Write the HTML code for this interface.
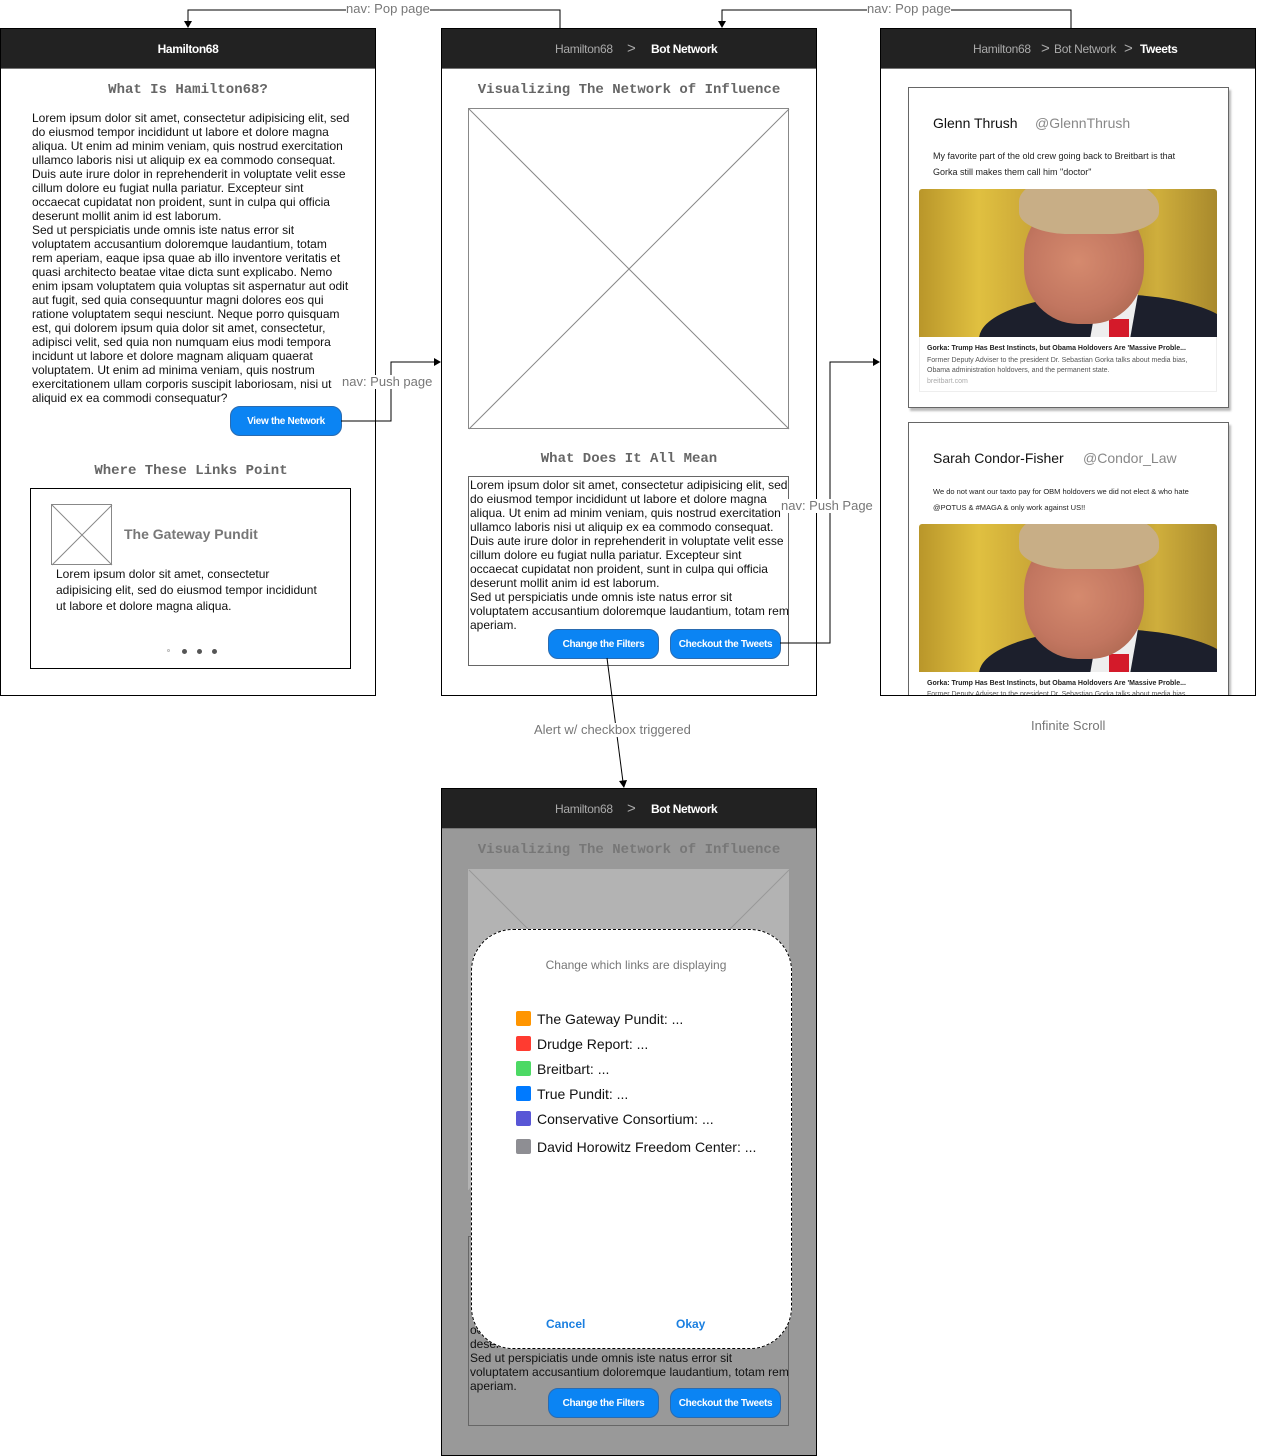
<!DOCTYPE html>
<html><head><meta charset="utf-8"><style>
*{margin:0;padding:0;box-sizing:border-box}
body{width:1261px;height:1456px;position:relative;background:#fff;font-family:"Liberation Sans",Arial,sans-serif;overflow:hidden}
.a{position:absolute;white-space:nowrap}
.panel{position:absolute;border:1px solid #000;background:#fff;overflow:hidden}
.hdr{position:absolute;left:0;top:0;right:0;height:40px;background:#222;border-bottom:1px solid #777}
.mono{font-family:"Liberation Mono",monospace;font-size:14px;font-weight:bold;color:#666}
.body{font-size:12px;line-height:14px;color:#111}
.btn{position:absolute;height:30px;background:#0b84f3;border:1px solid #2a6bb0;border-radius:10px;color:#fff;font-weight:bold;font-size:10px;text-align:center;line-height:30px;letter-spacing:-0.3px}
.lbl{position:absolute;font-size:13px;color:#777;background:#fff;white-space:nowrap;line-height:14px}
.sq{position:absolute;width:15px;height:15px;border-radius:2px}
.it{position:absolute;font-size:14px;color:#111;white-space:nowrap}
.photo{position:absolute;overflow:hidden;background:linear-gradient(90deg,#b9962a 0%,#e0c040 20%,#c8a436 40%,#a8862a 60%,#cfae3c 80%,#a8892c 100%)}
</style></head><body>

<!-- Left panel -->
<div class="panel" style="left:0;top:28px;width:376px;height:668px">
 <div class="hdr"><div class="a" style="left:0;right:0;top:13px;text-align:center;color:#fff;font-weight:bold;font-size:12px;letter-spacing:-0.4px">Hamilton68</div></div>
 <div class="a mono" style="left:0;width:374px;text-align:center;top:53px">What Is Hamilton68?</div>
 <div class="a body" style="left:31px;top:82px">Lorem ipsum dolor sit amet, consectetur adipisicing elit, sed<br>do eiusmod tempor incididunt ut labore et dolore magna<br>aliqua. Ut enim ad minim veniam, quis nostrud exercitation<br>ullamco laboris nisi ut aliquip ex ea commodo consequat.<br>Duis aute irure dolor in reprehenderit in voluptate velit esse<br>cillum dolore eu fugiat nulla pariatur. Excepteur sint<br>occaecat cupidatat non proident, sunt in culpa qui officia<br>deserunt mollit anim id est laborum.<br>Sed ut perspiciatis unde omnis iste natus error sit<br>voluptatem accusantium doloremque laudantium, totam<br>rem aperiam, eaque ipsa quae ab illo inventore veritatis et<br>quasi architecto beatae vitae dicta sunt explicabo. Nemo<br>enim ipsam voluptatem quia voluptas sit aspernatur aut odit<br>aut fugit, sed quia consequuntur magni dolores eos qui<br>ratione voluptatem sequi nesciunt. Neque porro quisquam<br>est, qui dolorem ipsum quia dolor sit amet, consectetur,<br>adipisci velit, sed quia non numquam eius modi tempora<br>incidunt ut labore et dolore magnam aliquam quaerat<br>voluptatem. Ut enim ad minima veniam, quis nostrum<br>exercitationem ullam corporis suscipit laboriosam, nisi ut<br>aliquid ex ea commodi consequatur?</div>
 <div class="btn" style="left:229px;top:377px;width:112px">View the Network</div>
 <div class="a mono" style="left:0;width:380px;text-align:center;top:434px">Where These Links Point</div>
 <div style="position:absolute;left:29px;top:459px;width:321px;height:181px;border:1px solid #000"></div>
 <svg style="position:absolute;left:50px;top:475px" width="62" height="62"><rect x="0.5" y="0.5" width="60" height="60" fill="#fff" stroke="#888"/><path d="M1 1L61 61M61 1L1 61" stroke="#888"/></svg>
 <div class="a" style="left:123px;top:497px;font-size:14px;font-weight:bold;color:#777">The Gateway Pundit</div>
 <div class="a" style="left:55px;top:537px;font-size:12px;line-height:16px;color:#111">Lorem ipsum dolor sit amet, consectetur<br>adipisicing elit, sed do eiusmod tempor incididunt<br>ut labore et dolore magna aliqua.</div>
 <div style="position:absolute;left:166px;top:620px;width:3px;height:3px;border:1px solid #bbb;border-radius:50%"></div>
 <div style="position:absolute;left:181px;top:620px;width:5px;height:5px;background:#555;border-radius:50%"></div>
 <div style="position:absolute;left:196px;top:620px;width:5px;height:5px;background:#555;border-radius:50%"></div>
 <div style="position:absolute;left:211px;top:620px;width:5px;height:5px;background:#555;border-radius:50%"></div>
</div>

<!-- Middle panel -->
<div class="panel" style="left:441px;top:28px;width:376px;height:668px">
 <div class="hdr">
  <div class="a" style="left:113px;top:13px;color:#aaa;font-size:12px;letter-spacing:-0.3px">Hamilton68</div>
  <div class="a" style="left:185px;top:11px;color:#aaa;font-size:15px">&gt;</div>
  <div class="a" style="left:209px;top:13px;color:#fff;font-weight:bold;font-size:12px;letter-spacing:-0.4px">Bot Network</div>
 </div>
 <div class="a mono" style="left:0;width:374px;text-align:center;top:53px">Visualizing The Network of Influence</div>
 <svg style="position:absolute;left:26px;top:79px" width="322" height="322"><rect x="0.5" y="0.5" width="320" height="320" fill="#fff" stroke="#888"/><path d="M1 1L321 321M321 1L1 321" stroke="#888"/></svg>
 <div class="a mono" style="left:0;width:374px;text-align:center;top:422px">What Does It All Mean</div>
 <div style="position:absolute;left:26px;top:447px;width:321px;height:190px;border:1px solid #666"></div>
 <div class="a body" style="left:28px;top:449px">Lorem ipsum dolor sit amet, consectetur adipisicing elit, sed<br>do eiusmod tempor incididunt ut labore et dolore magna<br>aliqua. Ut enim ad minim veniam, quis nostrud exercitation<br>ullamco laboris nisi ut aliquip ex ea commodo consequat.<br>Duis aute irure dolor in reprehenderit in voluptate velit esse<br>cillum dolore eu fugiat nulla pariatur. Excepteur sint<br>occaecat cupidatat non proident, sunt in culpa qui officia<br>deserunt mollit anim id est laborum.<br>Sed ut perspiciatis unde omnis iste natus error sit<br>voluptatem accusantium doloremque laudantium, totam rem<br>aperiam.</div>
 <div class="btn" style="left:106px;top:600px;width:111px">Change the Filters</div>
 <div class="btn" style="left:228px;top:600px;width:111px">Checkout the Tweets</div>
</div>

<!-- Right panel -->
<div class="panel" style="left:880px;top:28px;width:376px;height:668px">
 <div class="hdr">
  <div class="a" style="left:92px;top:13px;color:#aaa;font-size:12px;letter-spacing:-0.3px">Hamilton68</div>
  <div class="a" style="left:160px;top:11px;color:#aaa;font-size:15px">&gt;</div>
  <div class="a" style="left:173px;top:13px;color:#aaa;font-size:12px;letter-spacing:-0.3px">Bot Network</div>
  <div class="a" style="left:243px;top:11px;color:#aaa;font-size:15px">&gt;</div>
  <div class="a" style="left:259px;top:13px;color:#fff;font-weight:bold;font-size:12px;letter-spacing:-0.4px">Tweets</div>
 </div>
 <!-- tweet 1 -->
 <div style="position:absolute;left:27px;top:58px;width:321px;height:321px;border:1px solid #666;box-shadow:2px 3px 2px #bbb;background:#fff"></div>
 <div class="a" style="left:52px;top:86px;font-size:14px;color:#111">Glenn Thrush</div>
 <div class="a" style="left:154px;top:86px;font-size:14px;color:#888">@GlennThrush</div>
 <div class="a" style="left:52px;top:119px;font-size:9px;line-height:16px;color:#222">My favorite part of the old crew going back to Breitbart is that<br>Gorka still makes them call him "doctor"</div>
 <div class="photo" style="left:38px;top:160px;width:298px;height:148px;border-radius:3px 3px 0 0">
  <div style="position:absolute;left:60px;top:105px;width:260px;height:90px;border-radius:50% 50% 0 0;background:#1c1f2c"></div>
  <div style="position:absolute;left:175px;top:105px;width:40px;height:45px;background:#eee;transform:skewX(-10deg)"></div>
  <div style="position:absolute;left:190px;top:130px;width:20px;height:20px;background:#d41a2a"></div>
  <div style="position:absolute;left:105px;top:10px;width:120px;height:125px;border-radius:45% 45% 45% 45%;background:radial-gradient(ellipse at 45% 50%,#d58a6e 0%,#c27660 55%,#a9654e 90%)"></div>
  <div style="position:absolute;left:100px;top:-15px;width:140px;height:60px;border-radius:50% 60% 40% 40%;background:#c8ae86"></div>
 </div>
 <div style="position:absolute;left:38px;top:308px;width:298px;height:55px;border:1px solid #eee;border-top:0;background:#fff"></div>
 <div class="a" style="left:46px;top:316px;font-size:7px;font-weight:bold;color:#222">Gorka: Trump Has Best Instincts, but Obama Holdovers Are 'Massive Proble...</div>
 <div class="a" style="left:46px;top:327px;font-size:7px;line-height:10px;color:#555">Former Deputy Adviser to the president Dr. Sebastian Gorka talks about media bias,<br>Obama administration holdovers, and the permanent state.</div>
 <div class="a" style="left:46px;top:349px;font-size:7px;color:#aaa">breitbart.com</div>
 <!-- tweet 2 -->
 <div style="position:absolute;left:27px;top:393px;width:321px;height:300px;border:1px solid #666;box-shadow:2px 3px 2px #bbb;background:#fff"></div>
 <div class="a" style="left:52px;top:421px;font-size:14px;color:#111">Sarah Condor-Fisher</div>
 <div class="a" style="left:202px;top:421px;font-size:14px;color:#888">@Condor_Law</div>
 <div class="a" style="left:52px;top:455px;font-size:7.5px;line-height:16px;color:#222">We do not want our taxto pay for OBM holdovers we did not elect &amp; who hate<br>@POTUS &amp; #MAGA &amp; only work against US!!</div>
 <div class="photo" style="left:38px;top:495px;width:298px;height:148px;border-radius:3px 3px 0 0">
  <div style="position:absolute;left:60px;top:105px;width:260px;height:90px;border-radius:50% 50% 0 0;background:#1c1f2c"></div>
  <div style="position:absolute;left:175px;top:105px;width:40px;height:45px;background:#eee;transform:skewX(-10deg)"></div>
  <div style="position:absolute;left:190px;top:130px;width:20px;height:20px;background:#d41a2a"></div>
  <div style="position:absolute;left:105px;top:10px;width:120px;height:125px;border-radius:45%;background:radial-gradient(ellipse at 45% 50%,#d58a6e 0%,#c27660 55%,#a9654e 90%)"></div>
  <div style="position:absolute;left:100px;top:-15px;width:140px;height:60px;border-radius:50% 60% 40% 40%;background:#c8ae86"></div>
 </div>
 <div class="a" style="left:46px;top:651px;font-size:7px;font-weight:bold;color:#222">Gorka: Trump Has Best Instincts, but Obama Holdovers Are 'Massive Proble...</div>
 <div class="a" style="left:46px;top:662px;font-size:7px;color:#555">Former Deputy Adviser to the president Dr. Sebastian Gorka talks about media bias,</div>
</div>

<!-- Bottom panel -->
<div class="panel" style="left:441px;top:788px;width:376px;height:668px;background:#999">
 <div class="hdr">
  <div class="a" style="left:113px;top:13px;color:#aaa;font-size:12px;letter-spacing:-0.3px">Hamilton68</div>
  <div class="a" style="left:185px;top:11px;color:#aaa;font-size:15px">&gt;</div>
  <div class="a" style="left:209px;top:13px;color:#fff;font-weight:bold;font-size:12px;letter-spacing:-0.4px">Bot Network</div>
 </div>
 <div class="a mono" style="left:0;width:374px;text-align:center;top:53px;color:#777">Visualizing The Network of Influence</div>
 <svg style="position:absolute;left:26px;top:80px" width="322" height="322"><rect x="0" y="0" width="321" height="321" fill="#b3b3b3"/><path d="M1 1L321 321M321 1L1 321" stroke="#999"/></svg>
 <div style="position:absolute;left:26px;top:447px;width:321px;height:190px;border:1px solid #666"></div>
 <div class="a body" style="left:28px;top:534px">oc<br>deser<br>Sed ut perspiciatis unde omnis iste natus error sit<br>voluptatem accusantium doloremque laudantium, totam rem<br>aperiam.</div>
 <div class="btn" style="left:106px;top:599px;width:111px">Change the Filters</div>
 <div class="btn" style="left:228px;top:599px;width:111px">Checkout the Tweets</div>
 <div style="position:absolute;left:29px;top:140px;width:321px;height:420px;background:#fff;border:1px dashed #000;border-radius:42px"></div>
 <div class="a" style="left:0;width:388px;text-align:center;top:169px;font-size:12px;color:#777">Change which links are displaying</div>
 <div class="sq" style="left:74px;top:222px;background:#ff9500"></div><div class="it" style="left:95px;top:222px">The Gateway Pundit: ...</div>
 <div class="sq" style="left:74px;top:247px;background:#ff3b30"></div><div class="it" style="left:95px;top:247px">Drudge Report: ...</div>
 <div class="sq" style="left:74px;top:272px;background:#4cd964"></div><div class="it" style="left:95px;top:272px">Breitbart: ...</div>
 <div class="sq" style="left:74px;top:297px;background:#007aff"></div><div class="it" style="left:95px;top:297px">True Pundit: ...</div>
 <div class="sq" style="left:74px;top:322px;background:#5856d6"></div><div class="it" style="left:95px;top:322px">Conservative Consortium: ...</div>
 <div class="sq" style="left:74px;top:350px;background:#8e8e93"></div><div class="it" style="left:95px;top:350px">David Horowitz Freedom Center: ...</div>
 <div class="a" style="left:104px;top:528px;font-size:12px;font-weight:bold;color:#1a7fe0">Cancel</div>
 <div class="a" style="left:234px;top:528px;font-size:12px;font-weight:bold;color:#1a7fe0">Okay</div>
</div>

<!-- connectors -->
<svg style="position:absolute;left:0;top:0" width="1261" height="1456">
 <g stroke="#000" fill="none" stroke-width="1">
  <path d="M560 28V10H188V22"/>
  <path d="M1071 28V10H722V22"/>
  <path d="M341 421H391V362H435"/>
  <path d="M780 643H830V362H874"/>
  <path d="M607 658L623 782"/>
 </g>
 <g fill="#000">
  <path d="M184 21L188 28L192 21Z"/>
  <path d="M718 21L722 28L726 21Z"/>
  <path d="M434 358L441 362L434 366Z"/>
  <path d="M873 358L880 362L873 366Z"/>
  <path d="M619 781L624 788L627 780Z"/>
 </g>
</svg>
<div class="lbl" style="left:346px;top:2px">nav: Pop page</div>
<div class="lbl" style="left:867px;top:2px">nav: Pop page</div>
<div class="lbl" style="left:342px;top:375px">nav: Push page</div>
<div class="lbl" style="left:781px;top:499px">nav: Push Page</div>
<div class="lbl" style="left:534px;top:723px">Alert w/ checkbox triggered</div>
<div class="lbl" style="left:1031px;top:719px">Infinite Scroll</div>
</body></html>
